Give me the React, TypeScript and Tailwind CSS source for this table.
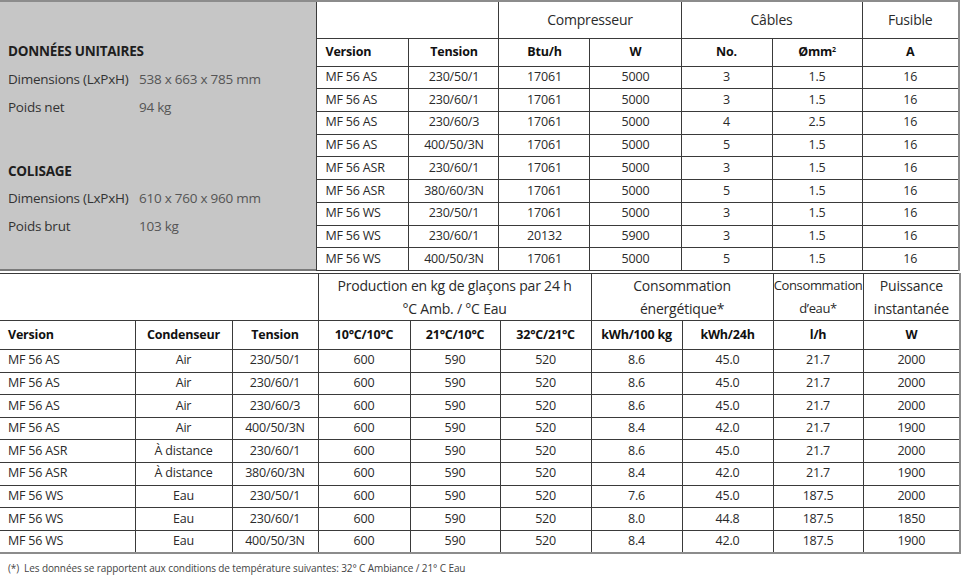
const font = { fontFamily: '"Open Sans", "Noto Sans", sans-serif' };

const topRows = [
  ['MF 56 AS', '230/50/1', '17061', '5000', '3', '1.5', '16'],
  ['MF 56 AS', '230/60/1', '17061', '5000', '3', '1.5', '16'],
  ['MF 56 AS', '230/60/3', '17061', '5000', '4', '2.5', '16'],
  ['MF 56 AS', '400/50/3N', '17061', '5000', '5', '1.5', '16'],
  ['MF 56 ASR', '230/60/1', '17061', '5000', '3', '1.5', '16'],
  ['MF 56 ASR', '380/60/3N', '17061', '5000', '5', '1.5', '16'],
  ['MF 56 WS', '230/50/1', '17061', '5000', '3', '1.5', '16'],
  ['MF 56 WS', '230/60/1', '20132', '5900', '3', '1.5', '16'],
  ['MF 56 WS', '400/50/3N', '17061', '5000', '5', '1.5', '16'],
];

const bottomRows = [
  ['MF 56 AS', 'Air', '230/50/1', '600', '590', '520', '8.6', '45.0', '21.7', '2000'],
  ['MF 56 AS', 'Air', '230/60/1', '600', '590', '520', '8.6', '45.0', '21.7', '2000'],
  ['MF 56 AS', 'Air', '230/60/3', '600', '590', '520', '8.6', '45.0', '21.7', '2000'],
  ['MF 56 AS', 'Air', '400/50/3N', '600', '590', '520', '8.4', '42.0', '21.7', '1900'],
  ['MF 56 ASR', 'À distance', '230/60/1', '600', '590', '520', '8.6', '45.0', '21.7', '2000'],
  ['MF 56 ASR', 'À distance', '380/60/3N', '600', '590', '520', '8.4', '42.0', '21.7', '1900'],
  ['MF 56 WS', 'Eau', '230/50/1', '600', '590', '520', '7.6', '45.0', '187.5', '2000'],
  ['MF 56 WS', 'Eau', '230/60/1', '600', '590', '520', '8.0', '44.8', '187.5', '1850'],
  ['MF 56 WS', 'Eau', '400/50/3N', '600', '590', '520', '8.4', '42.0', '187.5', '1900'],
];

const cell = 'border border-[#3a3a3a] p-0 text-center align-middle';

export default function App() {
  return (
    <div className="w-[964px] h-[579px] bg-white text-[#2a2a2a] text-[12.5px] tracking-[-0.2px] [font-stretch:88%]" style={font}>
      <div className="w-[960px] border-t-2 border-[#8c8c8c] flex">
        <div className="w-[318px] h-[269px] bg-[#c6c6c6] border-b-2 border-[#7a7a7a] pl-2 pt-[39px] text-[13.5px] text-[#333] tracking-[-0.25px]">
          <div className="font-bold text-[#1e1e1e] h-[28px]">DONNÉES UNITAIRES</div>
          <div className="flex h-[28px]">
            <span className="w-[131px]">Dimensions (LxPxH)</span>
            <span className="text-[#555]">538 x 663 x 785 mm</span>
          </div>
          <div className="flex h-[64px]">
            <span className="w-[131px]">Poids net</span>
            <span className="text-[#555]">94 kg</span>
          </div>
          <div className="font-bold text-[#1e1e1e] h-[27px]">COLISAGE</div>
          <div className="flex h-[28px]">
            <span className="w-[131px]">Dimensions (LxPxH)</span>
            <span className="text-[#555]">610 x 760 x 960 mm</span>
          </div>
          <div className="flex h-[28px]">
            <span className="w-[131px]">Poids brut</span>
            <span className="text-[#555]">103 kg</span>
          </div>
        </div>
        <table className="border-collapse table-fixed w-[642px] border-r-2 border-r-[#8c8c8c]">
          <colgroup>
            <col className="w-[92px]" />
            <col className="w-[90px]" />
            <col className="w-[91px]" />
            <col className="w-[91px]" />
            <col className="w-[91px]" />
            <col className="w-[90px]" />
            <col className="w-[97px]" />
          </colgroup>
          <thead>
            <tr className="h-[36px] text-[14px]">
              <th colSpan={2} className={`${cell} border-t-0 font-normal`}></th>
              <th colSpan={2} className={`${cell} border-t-0 font-normal`}>Compresseur</th>
              <th colSpan={2} className={`${cell} border-t-0 font-normal`}>Câbles</th>
              <th className={`${cell} border-t-0 border-r-0 font-normal`}>Fusible</th>
            </tr>
            <tr className="h-[28px] text-[12.5px] text-[#111]">
              <th className={`${cell} text-left pl-2 font-bold`}>Version</th>
              <th className={`${cell} font-bold`}>Tension</th>
              <th className={`${cell} font-bold`}>Btu/h</th>
              <th className={`${cell} font-bold`}>W</th>
              <th className={`${cell} font-bold`}>No.</th>
              <th className={`${cell} font-bold`}>
                Ømm<sup className="text-[7px]">2</sup>
              </th>
              <th className={`${cell} border-r-0 font-bold`}>A</th>
            </tr>
          </thead>
          <tbody>
            {topRows.map((r, i) => (
              <tr key={i} className="h-[22.7px]">
                {r.map((v, j) => (
                  <td key={j} className={`${cell} ${j === 0 ? 'text-left pl-2' : ''} ${j === 6 ? 'border-r-0' : ''}`}>
                    {v}
                  </td>
                ))}
              </tr>
            ))}
          </tbody>
        </table>
      </div>
      <table className="mt-[2px] border-collapse table-fixed w-[960px] border-t border-t-[#3a3a3a] border-b-2 border-b-[#8c8c8c] border-r-2 border-r-[#8c8c8c]">
        <colgroup>
          <col className="w-[135px]" />
          <col className="w-[97px]" />
          <col className="w-[86px]" />
          <col className="w-[92px]" />
          <col className="w-[90px]" />
          <col className="w-[91px]" />
          <col className="w-[91px]" />
          <col className="w-[91px]" />
          <col className="w-[90px]" />
          <col className="w-[97px]" />
        </colgroup>
        <thead>
          <tr className="h-[45px] text-[14px] leading-[23px]">
            <th colSpan={3} className={`${cell} border-l-0 font-normal`}></th>
            <th colSpan={3} className={`${cell} font-normal`}>
              Production en kg de glaçons par 24 h
              <br />
              °C Amb. / °C Eau
            </th>
            <th colSpan={2} className={`${cell} font-normal`}>
              Consommation
              <br />
              énergétique*
            </th>
            <th className={`${cell} font-normal text-[13px] tracking-[-0.35px]`}>
              Consommation
              <br />
              d’eau*
            </th>
            <th className={`${cell} border-r-0 font-normal`}>
              Puissance
              <br />
              instantanée
            </th>
          </tr>
          <tr className="h-[29px] text-[12.5px] text-[#111]">
            <th className={`${cell} border-l-0 text-left pl-2 font-bold`}>Version</th>
            <th className={`${cell} font-bold`}>Condenseur</th>
            <th className={`${cell} font-bold`}>Tension</th>
            <th className={`${cell} font-bold`}>10°C/10°C</th>
            <th className={`${cell} font-bold`}>21°C/10°C</th>
            <th className={`${cell} font-bold`}>32°C/21°C</th>
            <th className={`${cell} font-bold`}>kWh/100 kg</th>
            <th className={`${cell} font-bold`}>kWh/24h</th>
            <th className={`${cell} font-bold`}>l/h</th>
            <th className={`${cell} border-r-0 font-bold`}>W</th>
          </tr>
        </thead>
        <tbody>
          {bottomRows.map((r, i) => (
            <tr key={i} className="h-[22.6px]">
              {r.map((v, j) => (
                <td
                  key={j}
                  className={`${cell} ${j === 0 ? 'border-l-0 text-left pl-2' : ''} ${j === 9 ? 'border-r-0' : ''} ${i === 8 ? 'border-b-0' : ''}`}
                >
                  {v}
                </td>
              ))}
            </tr>
          ))}
        </tbody>
      </table>
      <div className="pl-2 pt-[7px] text-[10px] text-[#444] tracking-[-0.1px]">
        (*)&nbsp;&nbsp;Les données se rapportent aux conditions de température suivantes: 32° C Ambiance / 21° C Eau
      </div>
    </div>
  );
}
